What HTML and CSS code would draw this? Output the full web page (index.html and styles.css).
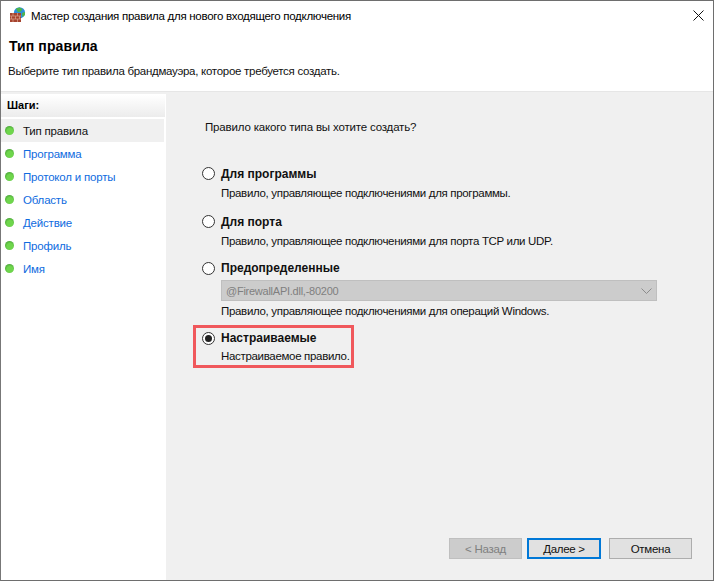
FILE: index.html
```html
<!DOCTYPE html>
<html lang="ru">
<head>
<meta charset="utf-8">
<title>Мастер создания правила</title>
<link rel="stylesheet" href="styles.css">
</head>
<body>
<div class="window">
  <div class="titlebar">
    <svg class="app-icon" width="16" height="16" viewBox="0 0 16 16">
      <circle cx="9.500" cy="5.800" r="5.600" fill="#2c8fdc"/>
      <path d="M6 1.500 9.500.5l3 1.500-1.500 2.500-3 .8zM12 6l3-1 0 3-2.500 2z" fill="#4fb548"/>
      <path d="M6.500 6l2 1.500 0 2-2 0z" fill="#7fd06a"/>
      <rect x="0" y="6" width="11" height="9" fill="#a5432e"/>
      <path d="M0 9h11M0 12h11M3 6v3M7.500 6v3M1.500 9v3M5.500 9v3M9.500 9v3M3 12v3M7.500 12v3" stroke="#d79a86" stroke-width=".8" fill="none"/>
    </svg>
    <span class="title-text">Мастер создания правила для нового входящего подключения</span>
    <svg class="close" width="11" height="11" viewBox="0 0 11 11"><path d="M.5.500l10 10M10.500.500l-10 10" stroke="#111" stroke-width="1" fill="none"/></svg>
  </div>
  <header class="head">
    <h1 class="head-title">Тип правила</h1>
    <p class="head-sub">Выберите тип правила брандмауэра, которое требуется создать.</p>
  </header>
  <div class="content">
    <nav class="steps">
      <div class="steps-head">Шаги:</div>
      <ul class="step-list">
        <li class="step current"><span class="dot"></span>Тип правила</li>
        <li class="step"><span class="dot"></span>Программа</li>
        <li class="step"><span class="dot"></span>Протокол и порты</li>
        <li class="step"><span class="dot"></span>Область</li>
        <li class="step"><span class="dot"></span>Действие</li>
        <li class="step"><span class="dot"></span>Профиль</li>
        <li class="step"><span class="dot"></span>Имя</li>
      </ul>
    </nav>
    <main class="main">
      <p class="question">Правило какого типа вы хотите создать?</p>
      <div class="options">
        <div class="option">
          <span class="radio"></span>
          <div class="opt-body">
            <div class="opt-title">Для программы</div>
            <div class="opt-desc">Правило, управляющее подключениями для программы.</div>
          </div>
        </div>
        <div class="option">
          <span class="radio"></span>
          <div class="opt-body">
            <div class="opt-title">Для порта</div>
            <div class="opt-desc">Правило, управляющее подключениями для порта TCP или UDP.</div>
          </div>
        </div>
        <div class="option predefined">
          <span class="radio"></span>
          <div class="opt-body">
            <div class="opt-title">Предопределенные</div>
            <div class="select">
              <span>@FirewallAPI.dll,-80200</span>
              <svg width="11" height="6" viewBox="0 0 11 6"><path d="M.5.500l5 5 5-5" stroke="#8c8c8c" fill="none"/></svg>
            </div>
            <div class="opt-desc">Правило, управляющее подключениями для операций Windows.</div>
          </div>
        </div>
        <div class="option marked">
          <span class="radio checked"></span>
          <div class="opt-body">
            <div class="opt-title">Настраиваемые</div>
            <div class="opt-desc">Настраиваемое правило.</div>
          </div>
        </div>
      </div>
      <div class="buttons">
        <button class="btn disabled" type="button">&lt; Назад</button>
        <button class="btn primary" type="button">Далее &gt;</button>
        <button class="btn cancel" type="button">Отмена</button>
      </div>
    </main>
  </div>
</div>
</body>
</html>
```
FILE: styles.css
```css
* { box-sizing: border-box; }
html, body { margin: 0; padding: 0; }
body { width: 714px; height: 581px; background: #fff; font-family: "Liberation Sans", Arial, sans-serif; font-size: 11.5px; letter-spacing: -0.28px; color: #111; overflow: hidden; }
.window { width: 714px; height: 581px; border: 1px solid #6e6e6e; border-left-color: #777; background: #fff; display: flex; flex-direction: column; }
.titlebar { height: 29px; flex: none; display: flex; align-items: center; padding: 0 0 0 9px; }
.app-icon { flex: none; margin-top: -1px; }
.title-text { margin-left: 5px; color: #000; }
.close { margin-left: auto; margin-right: 9px; margin-top: -1px; }
.head { height: 62px; flex: none; border-bottom: 1px solid #e6e6e6; padding: 0 0 0 8px; }
.head-title { margin: 8px 0 0; font-size: 14px; letter-spacing: 0.1px; line-height: 16px; font-weight: 700; color: #000; }
.head-sub { margin: 9px 0 0 -1px; line-height: 16px; }
.content { flex: 1; display: flex; min-height: 0; background: #f0f0f0; padding-top: 2px; }
.steps { width: 165px; flex: none; background: #fff; padding: 1px 1px 0 0; margin-right: 2px; }
.steps-head { height: 22px; padding: 0 0 0 6px; font-weight: 700; font-size: 11px; letter-spacing: 0; line-height: 21px; color: #000; background: linear-gradient(#fff, #ececec); }
.step-list { list-style: none; margin: 2px 0 0; padding: 0; }
.step { height: 23px; display: flex; align-items: center; padding-left: 4px; color: #0f6be0; letter-spacing: -0.2px; }
.step.current { background: #f0f0f0; color: #111; margin-right: 1px; }
.dot { width: 9px; height: 9px; margin-right: 9px; border-radius: 50%; background: radial-gradient(circle at 55% 60%, #6fd64c 0 40%, #4ca83a 75%, #a9b9a5 100%); flex: none; }
.main { flex: 1; position: relative; display: flex; flex-direction: column; padding: 25px 0 0 37px; }
.question { margin: 0; line-height: 16px; letter-spacing: -0.17px; }
.options { margin-top: 31px; display: flex; flex-direction: column; align-items: flex-start; }
.option { display: flex; align-items: flex-start; margin-left: -3px; }
.option + .option { margin-top: 13px; }
.option.predefined { margin-top: 11px; }
.radio { width: 13px; height: 13px; margin-top: 1px; border: 1px solid #333; border-radius: 50%; background: #fff; flex: none; position: relative; }
.predefined .radio, .marked .radio { margin-top: 2px; }
.radio.checked::after { content: ""; position: absolute; left: 2px; top: 2px; width: 7px; height: 7px; border-radius: 50%; background: #222; }
.opt-body { margin-left: 6px; }
.opt-title { font-weight: 700; font-size: 12px; letter-spacing: 0; line-height: 16px; color: #111; }
.opt-desc { line-height: 16px; margin-top: 3px; letter-spacing: -0.32px; }
.select { width: 436px; height: 21px; margin-top: 4px; margin-bottom: 2px; padding: 0 4px; display: flex; align-items: center; justify-content: space-between; background: #cccccc; border: 1px solid #bfbfbf; color: #7f7f7f; font-size: 11px; letter-spacing: -0.25px; }
.select + .opt-desc { margin-top: 0; }
.option.marked { outline: 3px solid #f0585c; padding: 2px 0 1px 6px; margin-left: -9px; width: 155px; margin-top: 9px; }
.marked .opt-body { white-space: nowrap; }
.marked .opt-desc { margin-top: 2px; }
.buttons { position: absolute; right: 21px; bottom: 21px; display: flex; gap: 5px; }
.btn { height: 21px; padding: 0; font: inherit; letter-spacing: -0.28px; background: #e1e1e1; border: 1px solid #adadad; color: #111; }
.disabled { width: 73px; background: #ccc; border-color: #bfbfbf; color: #808080; }
.primary { width: 74px; border: 2px solid #0078d7; }
.cancel { width: 83px; margin-left: 3px; }
```
